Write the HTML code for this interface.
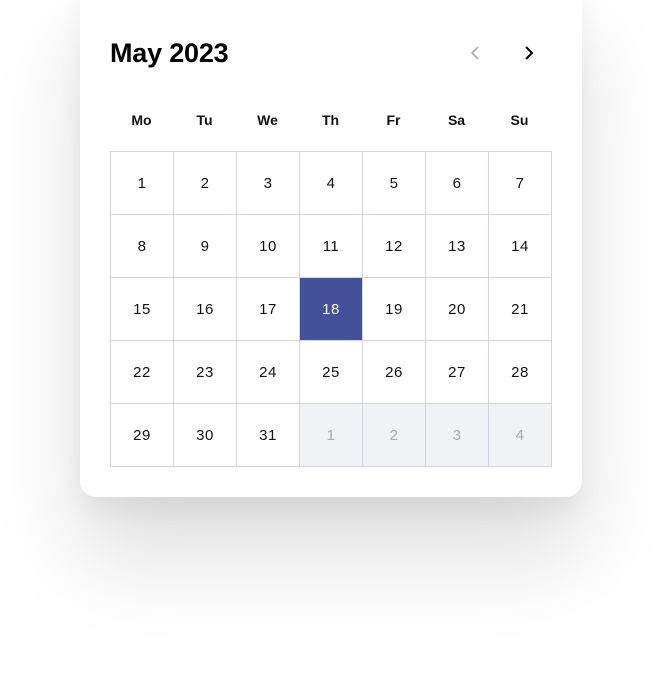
<!DOCTYPE html>
<html><head><style>
html,body{margin:0;padding:0;background:#fff;width:662px;height:677px;overflow:hidden;font-family:"Liberation Sans",Arial,sans-serif}
.card{position:absolute;left:80px;top:-20px;width:502px;height:517px;background:#fff;border-radius:16px;box-shadow:0 60px 90px rgba(0,0,0,0.13),0 15px 25px rgba(0,0,0,0.05)}
.title{position:absolute;left:110px;top:38px;font-size:27px;font-weight:bold;color:#000;letter-spacing:-0.2px}
.nav{position:absolute;top:44px}
.dow{position:absolute;top:112px;width:63px;text-align:center;font-size:14px;font-weight:bold;color:#111}
.grid{position:absolute;left:110px;top:151px;border-top:1px solid #d4d3df;border-left:1px solid #d4d3df;display:grid;grid-template-columns:repeat(7,63px);grid-template-rows:repeat(5,63px)}
.grid div{border-right:1px solid #d4d3df;border-bottom:1px solid #d4d3df;display:flex;align-items:center;justify-content:center;font-size:15px;color:#111;letter-spacing:0.5px}
.grid .sel{background:#43519a;color:#fff}
.grid .o{background:#f1f2f6;color:#aaa}
</style></head><body>
<div class="card"></div>
<div class="title">May 2023</div>
<svg class="nav" style="left:467px" width="16" height="18" viewBox="0 0 16 18"><path d="M11 3 L5 9 L11 15" fill="none" stroke="#aaa" stroke-width="1.6"/></svg>
<svg class="nav" style="left:521px" width="16" height="18" viewBox="0 0 16 18"><path d="M5 3 L11 9 L5 15" fill="none" stroke="#000" stroke-width="2"/></svg>
<div class="dow" style="left:110px">Mo</div><div class="dow" style="left:173px">Tu</div><div class="dow" style="left:236px">We</div><div class="dow" style="left:299px">Th</div><div class="dow" style="left:362px">Fr</div><div class="dow" style="left:425px">Sa</div><div class="dow" style="left:488px">Su</div>
<div class="grid">
<div>1</div><div>2</div><div>3</div><div>4</div><div>5</div><div>6</div><div>7</div>
<div>8</div><div>9</div><div>10</div><div>11</div><div>12</div><div>13</div><div>14</div>
<div>15</div><div>16</div><div>17</div><div class="sel">18</div><div>19</div><div>20</div><div>21</div>
<div>22</div><div>23</div><div>24</div><div>25</div><div>26</div><div>27</div><div>28</div>
<div>29</div><div>30</div><div>31</div><div class="o">1</div><div class="o">2</div><div class="o">3</div><div class="o">4</div>
</div>
</body></html>
